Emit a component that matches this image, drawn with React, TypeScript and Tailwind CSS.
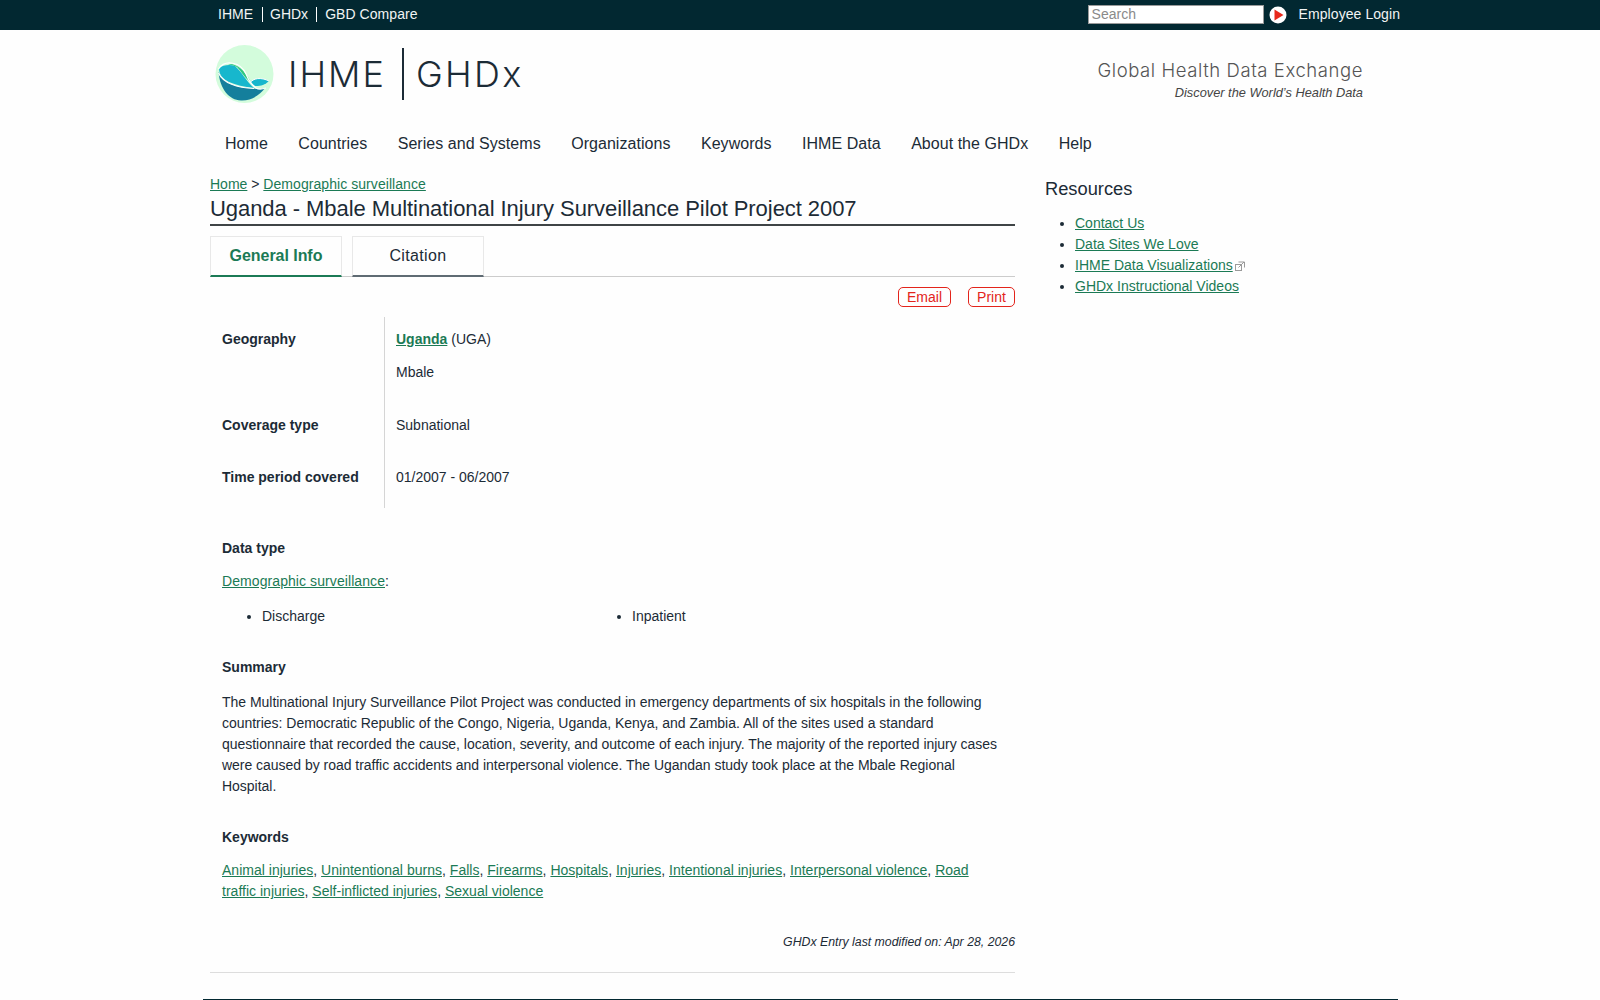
import React from "react";

const sans = "font-['Liberation_Sans',Arial,sans-serif]";
const link = "text-[#1b7a55] underline";

// "Road traffic injuries" breaks over two lines in the reference
const keywords: [string, string][] = [
  ["Animal injuries", ", "],
  ["Unintentional burns", ", "],
  ["Falls", ", "],
  ["Firearms", ", "],
  ["Hospitals", ", "],
  ["Injuries", ", "],
  ["Intentional injuries", ", "],
  ["Interpersonal violence", ", "],
  ["Road", " "],
  ["traffic injuries", ", "],
  ["Self-inflicted injuries", ", "],
  ["Sexual violence", ""],
];

const navItems = [
  "Home",
  "Countries",
  "Series and Systems",
  "Organizations",
  "Keywords",
  "IHME Data",
  "About the GHDx",
  "Help",
];

function Logo() {
  return (
    <svg width="60" height="60" viewBox="0 0 60 60" className="mt-[2px]">
      <circle cx="29.5" cy="29" r="29" fill="#d3fcdc" />
      <path d="M3.5 27 C8 38 22 43 39 43.5 C44 44.5 47 44 50 43 C45 50 36 56 26 55.5 C14 55 5 44 3.5 27 Z" fill="#147f9c" />
      <path d="M4 23 C8 20 15 19 20 21 C27 27 31 36 39 43 C29 42 21 40 14 37 C8 34 4 30 4 23 Z" fill="#17b7cd" />
      <path d="M13 19 C21 18 29 24 36 37 C30 34 27 27 22 22 C19 20.5 16 20 13 19 Z" fill="#2fc781" />
      <path d="M35 37 C40 32 50 33 54 36 C50 40 46 41 41 41 C39 41 37 39 35 37 Z" fill="#17b7cd" />
      <path d="M3.5 24 C10 14 26 17 31 29 C33 34 36 39 41 43 C44 45 48 44 51 43" fill="none" stroke="#ffffff" strokeWidth="1.2" />
      <path d="M3.5 28 C8 38 22 43 39 43.5" fill="none" stroke="#ffffff" strokeWidth="1.2" />
      <path d="M35 38 C38 33 46 32 54 36" fill="none" stroke="#ffffff" strokeWidth="1" />
    </svg>
  );
}

function PlayButton() {
  return (
    <svg width="18" height="18" viewBox="0 0 18 18" className="ml-[5px]">
      <circle cx="9" cy="9" r="8.5" fill="#ffffff" />
      <path d="M5.5 3.5 L14.5 9 L5.5 14.5 Z" fill="#e8291c" />
    </svg>
  );
}

function ExternalIcon() {
  return (
    <svg width="10" height="10" viewBox="0 0 10 10" className="ml-[2px] inline-block align-[-1px]" fill="none" stroke="#9a9a9a" strokeWidth="1">
      <rect x="0.5" y="3.5" width="6" height="6" />
      <path d="M3.5 1 H9.5 V6.5 M3.5 6.5 L9 1" />
    </svg>
  );
}

export default function App() {
  return (
    <div className={`${sans} min-h-screen overflow-hidden bg-[#fefefe] text-[14px] leading-[21px] text-[#1c2b36]`}>
      <div className="h-[30px] bg-[#022831]">
        <div className="mx-auto flex h-[29px] w-[1200px] items-center justify-between pl-[18px] text-[14px] text-[#f1f4f4]">
          <div className="flex items-center">
            <span className="border-r border-white pr-[9px] leading-[15px]">IHME</span>
            <span className="border-r border-white pr-[8px] pl-[7px] leading-[15px]">GHDx</span>
            <span className="pl-[8px] leading-[15px] tracking-[0.06px]">GBD Compare</span>
          </div>
          <div className="flex items-center">
            <input
              placeholder="Search"
              className="h-[19px] w-[176px] border-[1px] border-[#9a9a9a] bg-white px-[3px] text-[14px] outline-none placeholder:text-[#8a8a8a]"
            />
            <PlayButton />
            <span className="ml-[12px] tracking-[0.07px]">Employee Login</span>
          </div>
        </div>
      </div>

      <div className="mx-auto w-[1200px] pl-[10px]">
        <header className="flex h-[98px] items-start justify-between pr-[37px]">
          <div className="mt-[13px] flex items-center pl-[5px]">
            <Logo />
            <span className="ml-[13px] font-['Inter',sans-serif] text-[36px] leading-[52px] font-light tracking-[2px] text-[#1c2b36]">IHME</span>
            <span className="ml-[16px] h-[52px] w-[2px] bg-[#1c2b36]" />
            <span className="ml-[12px] font-['Inter',sans-serif] text-[36px] leading-[52px] font-light tracking-[2.3px] text-[#1c2b36]">GHDx</span>
          </div>
          <div className="mt-[28px] text-right">
            <div className="font-['Inter',sans-serif] text-[18.5px] leading-[25px] font-light tracking-[0.57px] text-[#555555]">Global Health Data Exchange</div>
            <div className="text-[12.8px] leading-[20px] text-[#444444] italic">Discover the World’s Health Data</div>
          </div>
        </header>

        <nav className="flex h-[30px] items-center gap-[30.5px] pl-[15px] text-[16px] tracking-[0.04px]">
          {navItems.map((item) => (
            <span key={item}>{item}</span>
          ))}
        </nav>

        <div className="mt-[16px] flex items-start">
          <main className="w-[805px]">
            <div>
              <a className={link}>Home</a> &gt; <a className={`${link} tracking-[0.06px]`}>Demographic surveillance</a>
            </div>
            <h1 className="h-[31px] border-b-2 border-[#3f4446] text-[22px] leading-[28px] font-normal tracking-[-0.06px]">
              Uganda - Mbale Multinational Injury Surveillance Pilot Project 2007
            </h1>

            <div className="mt-[10px] flex h-[41px] gap-[10px] border-b border-[#cccccc] text-[16px]">
              <div className="flex h-[41px] w-[132px] items-center justify-center border border-b-2 border-[#e8e8e8] border-b-[#1b7a55] pb-[2px] font-bold tracking-[-0.05px] text-[#1b7a55]">
                General Info
              </div>
              <div className="flex h-[41px] w-[132px] items-center justify-center border border-b-2 border-[#e8e8e8] border-b-[#5f6b73] pb-[2px] tracking-[0.35px]">
                Citation
              </div>
            </div>

            <div className="mt-[10px] flex h-[20px] justify-end gap-[17px] text-[#e3241b]">
              <span className="flex h-[20px] w-[53px] items-center justify-center rounded-[5px] border border-[#e3241b]">Email</span>
              <span className="flex h-[20px] w-[47px] items-center justify-center rounded-[5px] border border-[#e3241b]">Print</span>
            </div>

            <div className="mt-[10px] flex h-[191px]">
              <div className="w-[175px] border-r border-[#d5d5d5] pt-[12px] pl-[12px] font-bold">
                <div>Geography</div>
                <div className="mt-[65px]">Coverage type</div>
                <div className="mt-[31px]">Time period covered</div>
              </div>
              <div className="pt-[12px] pl-[11px]">
                <div>
                  <a className={`${link} font-bold`}>Uganda</a> (UGA)
                </div>
                <div className="mt-[12px]">Mbale</div>
                <div className="mt-[32px]">Subnational</div>
                <div className="mt-[31px]">01/2007 - 06/2007</div>
              </div>
            </div>

            <div className="px-[12px]">
              <div className="mt-[30px] font-bold">Data type</div>
              <div className="mt-[12px]">
                <a className={`${link} tracking-[0.08px]`}>Demographic surveillance</a>:
              </div>
              <div className="mt-[14px] grid w-[740px] grid-cols-2">
                <ul className="list-disc pl-[40px]">
                  <li>Discharge</li>
                </ul>
                <ul className="list-disc pl-[40px]">
                  <li>Inpatient</li>
                </ul>
              </div>
              <div className="mt-[30px] font-bold">Summary</div>
              <p className="mt-[14px] tracking-[-0.025px]">
                The Multinational Injury Surveillance Pilot Project was conducted in emergency departments of six hospitals in the following countries: Democratic Republic of the Congo, Nigeria, Uganda, Kenya, and Zambia. All of the sites used a standard questionnaire that recorded the cause, location, severity, and outcome of each injury. The majority of the reported injury cases were caused by road traffic accidents and interpersonal violence. The Ugandan study took place at the Mbale Regional Hospital.
              </p>
              <div className="mt-[30px] font-bold">Keywords</div>
              <p className="mt-[12px] tracking-[0.015px]">
                {keywords.map(([k, sep]) => (
                  <React.Fragment key={k}>
                    <a className={link}>{k}</a>
                    {sep}
                  </React.Fragment>
                ))}
              </p>
            </div>

            <div className="mt-[30px] text-right text-[12.3px] italic">GHDx Entry last modified on: Apr 28, 2026</div>
            <div className="mt-[19px] border-b border-[#dddddd]" />
          </main>

          <aside className="ml-[30px] w-[340px]">
            <div className="mt-[1px] text-[18.3px] leading-[28px]">Resources</div>
            <ul className="mt-[10px] list-disc pl-[30px]">
              <li><a className={link}>Contact Us</a></li>
              <li><a className={link}>Data Sites We Love</a></li>
              <li><a className={link}>IHME Data Visualizations</a><ExternalIcon /></li>
              <li><a className={link}>GHDx Instructional Videos</a></li>
            </ul>
          </aside>
        </div>
      </div>

      <div className="mx-auto mt-[26px] h-[1px] w-[1195px] bg-[#022831]" />
    </div>
  );
}
